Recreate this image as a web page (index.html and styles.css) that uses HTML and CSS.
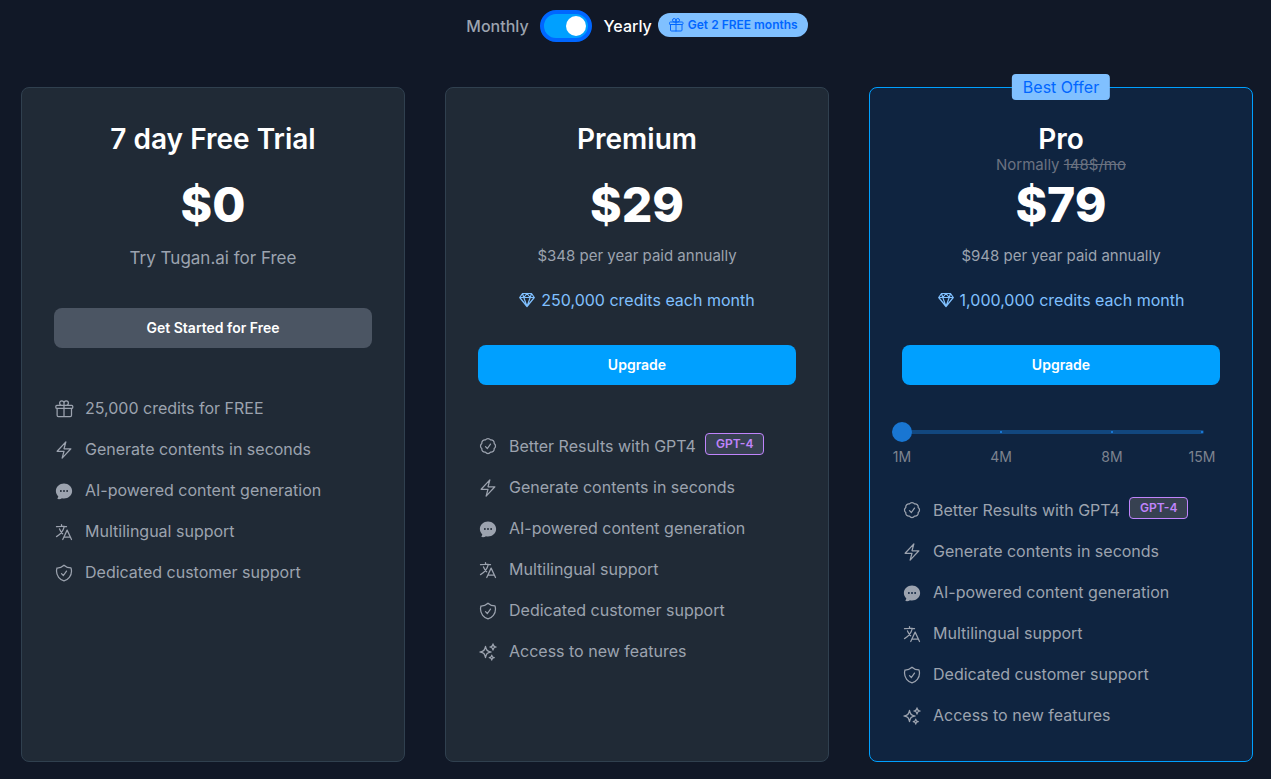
FILE: index.html
```html
<!DOCTYPE html>
<html lang="en">
<head>
<meta charset="utf-8">
<meta name="viewport" content="width=device-width, initial-scale=1">
<title>Pricing</title>
<link rel="stylesheet" href="styles.css">
</head>
<body>
<svg class="sprite" aria-hidden="true">
  <symbol id="gift" viewBox="0 0 24 24"><path d="M21 11.25v8.25a1.5 1.5 0 0 1-1.5 1.5H5.25a1.5 1.5 0 0 1-1.5-1.5v-8.25M12 4.875A2.625 2.625 0 1 0 9.375 7.5H12m0-2.625V7.5m0-2.625A2.625 2.625 0 1 1 14.625 7.5H12m0 0V21m-8.625-9.75h18c.621 0 1.125-.504 1.125-1.125v-1.5c0-.621-.504-1.125-1.125-1.125h-18c-.621 0-1.125.504-1.125 1.125v1.5c0 .621.504 1.125 1.125 1.125Z"/></symbol>
  <symbol id="bolt" viewBox="0 0 24 24"><path d="m3.75 13.5 10.5-11.25L12 10.5h8.25L9.75 21.75 12 13.5H3.75Z"/></symbol>
  <symbol id="chat" viewBox="0 0 24 24"><path fill="currentColor" stroke="none" fill-rule="evenodd" d="M4.804 21.644A6.707 6.707 0 0 0 6 21.75a6.721 6.721 0 0 0 3.583-1.029c.774.182 1.584.279 2.417.279 5.322 0 9.75-3.97 9.75-9 0-5.03-4.428-9-9.75-9s-9.75 3.97-9.75 9c0 2.409 1.025 4.587 2.674 6.192.232.226.277.428.254.543a3.73 3.73 0 0 1-.814 1.686.75.75 0 0 0 .44 1.223ZM8.25 10.875a1.125 1.125 0 1 0 0 2.25 1.125 1.125 0 0 0 0-2.25ZM10.875 12a1.125 1.125 0 1 1 2.25 0 1.125 1.125 0 0 1-2.25 0Zm4.875-1.125a1.125 1.125 0 1 0 0 2.25 1.125 1.125 0 0 0 0-2.25Z"/></symbol>
  <symbol id="language" viewBox="0 0 24 24"><path d="m10.5 21 5.25-11.25L21 21m-9-3h7.5M3 5.621a48.474 48.474 0 0 1 6-.371m0 0c1.12 0 2.233.038 3.334.114M9 5.25V3m3.334 2.364C11.176 10.658 7.69 15.08 3 17.502m9.334-12.138c.896.061 1.785.147 2.666.257m-4.589 8.495a18.023 18.023 0 0 1-3.827-5.802"/></symbol>
  <symbol id="shield" viewBox="0 0 24 24"><path d="M9 12.75 11.25 15 15 9.75m-3-7.036A11.959 11.959 0 0 1 3.598 6 11.99 11.99 0 0 0 3 9.749c0 5.592 3.824 10.29 9 11.623 5.176-1.332 9-6.03 9-11.622 0-1.31-.21-2.571-.598-3.751h-.152c-3.196 0-6.1-1.248-8.25-3.285Z"/></symbol>
  <symbol id="badge" viewBox="0 0 24 24"><path d="M9 12.75 11.25 15 15 9.75M21 12c0 1.268-.63 2.39-1.593 3.068a3.745 3.745 0 0 1-1.043 3.296 3.745 3.745 0 0 1-3.296 1.043A3.745 3.745 0 0 1 12 21c-1.268 0-2.39-.63-3.068-1.593a3.746 3.746 0 0 1-3.296-1.043 3.745 3.745 0 0 1-1.043-3.296A3.745 3.745 0 0 1 3 12c0-1.268.63-2.39 1.593-3.068a3.745 3.745 0 0 1 1.043-3.296 3.746 3.746 0 0 1 3.296-1.043A3.746 3.746 0 0 1 12 3c1.268 0 2.39.63 3.068 1.593a3.746 3.746 0 0 1 3.296 1.043 3.746 3.746 0 0 1 1.043 3.296A3.745 3.745 0 0 1 21 12Z"/></symbol>
  <symbol id="sparkles" viewBox="0 0 24 24"><path d="M9.813 15.904 9 18.75l-.813-2.846a4.5 4.5 0 0 0-3.09-3.09L2.25 12l2.846-.813a4.5 4.5 0 0 0 3.09-3.09L9 5.25l.813 2.846a4.5 4.5 0 0 0 3.09 3.09L15.75 12l-2.846.813a4.5 4.5 0 0 0-3.09 3.09ZM18.259 8.715 18 9.75l-.259-1.035a3.375 3.375 0 0 0-2.455-2.456L14.25 6l1.036-.259a3.375 3.375 0 0 0 2.455-2.456L18 2.25l.259 1.035a3.375 3.375 0 0 0 2.456 2.456L21.75 6l-1.035.259a3.375 3.375 0 0 0-2.456 2.456ZM16.894 20.567 16.5 21.75l-.394-1.183a2.25 2.25 0 0 0-1.423-1.423L13.5 18.75l1.183-.394a2.25 2.25 0 0 0 1.423-1.423l.394-1.183.394 1.183a2.25 2.25 0 0 0 1.423 1.423l1.183.394-1.183.394a2.25 2.25 0 0 0-1.423 1.423Z"/></symbol>
  <symbol id="gem" viewBox="0 0 16 16"><path stroke-width="1.2" d="M3.5 1.5h9L15.3 5.5 8 14.5.7 5.5ZM.7 5.5h14.6M3.5 1.5 4.8 5.5 8 1.5l3.2 4 1.3-4M4.8 5.5 8 14.5l3.2-9"/></symbol>
</svg>

<main class="pricing">
  <div class="billing">
    <label class="billing-monthly" for="cycle">Monthly</label>
    <input class="switch" type="checkbox" role="switch" id="cycle" checked>
    <label class="billing-yearly" for="cycle">Yearly</label>
    <span class="promo"><svg class="icon icon-promo"><use href="#gift"/></svg>Get 2 FREE months</span>
  </div>

  <div class="plans">
    <section class="plan">
      <h2 class="plan-name">7 day Free Trial</h2>
      <p class="price">$0</p>
      <p class="tagline">Try Tugan.ai for Free</p>
      <button class="button button-muted" type="button">Get Started for Free</button>
      <ul class="features">
        <li><svg class="icon"><use href="#gift"/></svg>25,000 credits for FREE</li>
        <li><svg class="icon"><use href="#bolt"/></svg>Generate contents in seconds</li>
        <li><svg class="icon"><use href="#chat"/></svg>AI-powered content generation</li>
        <li><svg class="icon"><use href="#language"/></svg>Multilingual support</li>
        <li><svg class="icon"><use href="#shield"/></svg>Dedicated customer support</li>
      </ul>
    </section>

    <section class="plan">
      <h2 class="plan-name">Premium</h2>
      <p class="price">$29</p>
      <p class="annual">$348 per year paid annually</p>
      <p class="credits"><svg class="icon icon-gem"><use href="#gem"/></svg>250,000 credits each month</p>
      <button class="button" type="button">Upgrade</button>
      <ul class="features">
        <li><svg class="icon"><use href="#badge"/></svg>Better Results with GPT4 <span class="tag">GPT-4</span></li>
        <li><svg class="icon"><use href="#bolt"/></svg>Generate contents in seconds</li>
        <li><svg class="icon"><use href="#chat"/></svg>AI-powered content generation</li>
        <li><svg class="icon"><use href="#language"/></svg>Multilingual support</li>
        <li><svg class="icon"><use href="#shield"/></svg>Dedicated customer support</li>
        <li><svg class="icon"><use href="#sparkles"/></svg>Access to new features</li>
      </ul>
    </section>

    <section class="plan plan-pro">
      <span class="best">Best Offer</span>
      <h2 class="plan-name">Pro</h2>
      <p class="normally">Normally <s>148$/mo</s></p>
      <p class="price">$79</p>
      <p class="annual">$948 per year paid annually</p>
      <p class="credits"><svg class="icon icon-gem"><use href="#gem"/></svg>1,000,000 credits each month</p>
      <button class="button" type="button">Upgrade</button>
      <div class="volume">
        <input class="slider" type="range" min="0" max="100" value="0" aria-label="Credits per month">
        <div class="marks"><span>1M</span><span>4M</span><span>8M</span><span>15M</span></div>
      </div>
      <ul class="features">
        <li><svg class="icon"><use href="#badge"/></svg>Better Results with GPT4 <span class="tag">GPT-4</span></li>
        <li><svg class="icon"><use href="#bolt"/></svg>Generate contents in seconds</li>
        <li><svg class="icon"><use href="#chat"/></svg>AI-powered content generation</li>
        <li><svg class="icon"><use href="#language"/></svg>Multilingual support</li>
        <li><svg class="icon"><use href="#shield"/></svg>Dedicated customer support</li>
        <li><svg class="icon"><use href="#sparkles"/></svg>Access to new features</li>
      </ul>
    </section>
  </div>
</main>
</body>
</html>
```
FILE: styles.css
```css
* { box-sizing: border-box; }

body {
  margin: 0;
  background: #111827;
  color: #9ca3af;
  font-family: Inter, "Liberation Sans", sans-serif;
  font-size: 16px;
  line-height: 24px;
}

h2, p, ul { margin: 0; padding: 0; }

.sprite { display: none; }

.icon {
  width: 20px;
  height: 20px;
  flex: none;
  fill: none;
  stroke: currentColor;
  stroke-width: 1.5;
  stroke-linecap: round;
  stroke-linejoin: round;
}

.pricing { padding: 10px 18px 18px 21px; }

.billing {
  display: flex;
  justify-content: center;
  align-items: center;
  height: 32px;
}

.billing-monthly { font-weight: 500; }
.billing-yearly { color: #fff; font-weight: 500; }

.switch {
  appearance: none;
  width: 52px;
  height: 32px;
  margin: 0 12px 0 11px;
  padding: 2px;
  border: 4px solid #0066ff;
  border-radius: 16px;
  background: #00a0ff;
  display: flex;
  cursor: pointer;
}

.switch::before {
  content: "";
  width: 20px;
  height: 20px;
  border-radius: 50%;
  background: #fff;
}

.switch:checked { justify-content: flex-end; }

.promo {
  display: flex;
  align-items: center;
  gap: 4px;
  height: 24px;
  margin: 0 0 2px 6px;
  padding: 0 10px;
  border-radius: 12px;
  background: #80c0ff;
  color: #0066ff;
  font-size: 12px;
  font-weight: 600;
}

.icon-promo { width: 16px; height: 16px; }

.plans {
  display: grid;
  grid-template-columns: repeat(3, 1fr);
  gap: 40px;
  margin-top: 45px;
}

.plan {
  position: relative;
  display: flex;
  flex-direction: column;
  padding: 33px 32px;
  border: 1px solid #30404f;
  border-radius: 8px;
  background: #202a36;
  text-align: center;
}

.plan-pro { border-color: #00a0ff; background: #0f2440; }

.best {
  position: absolute;
  top: -14px;
  left: 50%;
  transform: translateX(-50%);
  padding: 1px 11px;
  border-radius: 4px;
  background: #80c0ff;
  color: #0066ff;
}

.plan-name {
  color: #fff;
  font-size: 28px;
  font-weight: 600;
  line-height: 36px;
}

.price {
  margin-top: 24px;
  color: #fff;
  font-size: 48px;
  font-weight: 800;
  line-height: 48px;
}

.normally { color: #6b7280; font-size: 15px; line-height: 16px; }
.normally + .price { margin-top: 8px; }

.tagline { margin-top: 15px; font-size: 17px; line-height: 28px; }
.annual { margin-top: 15px; font-size: 15px; }

.credits {
  display: flex;
  justify-content: center;
  align-items: center;
  gap: 6px;
  margin-top: 20px;
  color: #80c0ff;
}

.icon-gem { width: 16px; height: 16px; }

.button {
  height: 40px;
  margin-top: 33px;
  border: 0;
  border-radius: 8px;
  background: #00a0ff;
  color: #fff;
  font: 600 14px/20px Inter, "Liberation Sans", sans-serif;
  cursor: pointer;
}

.button-muted { margin-top: 36px; background: #4b5563; }

.volume { margin-top: 37px; padding-right: 18px; }

.slider {
  appearance: none;
  display: block;
  width: calc(100% + 20px);
  height: 20px;
  margin: 0 -10px;
  background: none;
  cursor: pointer;
}

.slider::-webkit-slider-runnable-track {
  height: 4px;
  margin: 0 8px;
  border-radius: 2px;
  background:
    radial-gradient(#1976d2 1px, transparent 1px) 33% 0 / 4px 4px no-repeat,
    radial-gradient(#1976d2 1px, transparent 1px) 70% 0 / 4px 4px no-repeat,
    radial-gradient(#1976d2 1px, transparent 1px) 100% 0 / 4px 4px no-repeat,
    #12477e;
}

.slider::-webkit-slider-thumb {
  appearance: none;
  width: 20px;
  height: 20px;
  margin: -8px;
  border-radius: 50%;
  background: #1976d2;
}

.marks {
  display: grid;
  grid-template-columns: 33fr 37fr 30fr 0fr;
  justify-items: start;
  margin-top: 5px;
  color: #7d838f;
  font-size: 14px;
  line-height: 20px;
}

.marks span { width: 32px; margin: 0 -16px; }

.features {
  display: grid;
  gap: 16px;
  margin-top: 48px;
  list-style: none;
}

.volume + .features { margin-top: 30px; }

.features li {
  display: flex;
  align-items: center;
  gap: 11px;
  line-height: 25px;
  text-align: left;
}

.tag {
  height: 22px;
  margin: 0 0 4px -2px;
  padding: 0 10px;
  border: 1px solid #c084fc;
  border-radius: 4px;
  background: #374151;
  color: #c084fc;
  font-size: 12px;
  font-weight: 600;
  line-height: 20px;
}
```
